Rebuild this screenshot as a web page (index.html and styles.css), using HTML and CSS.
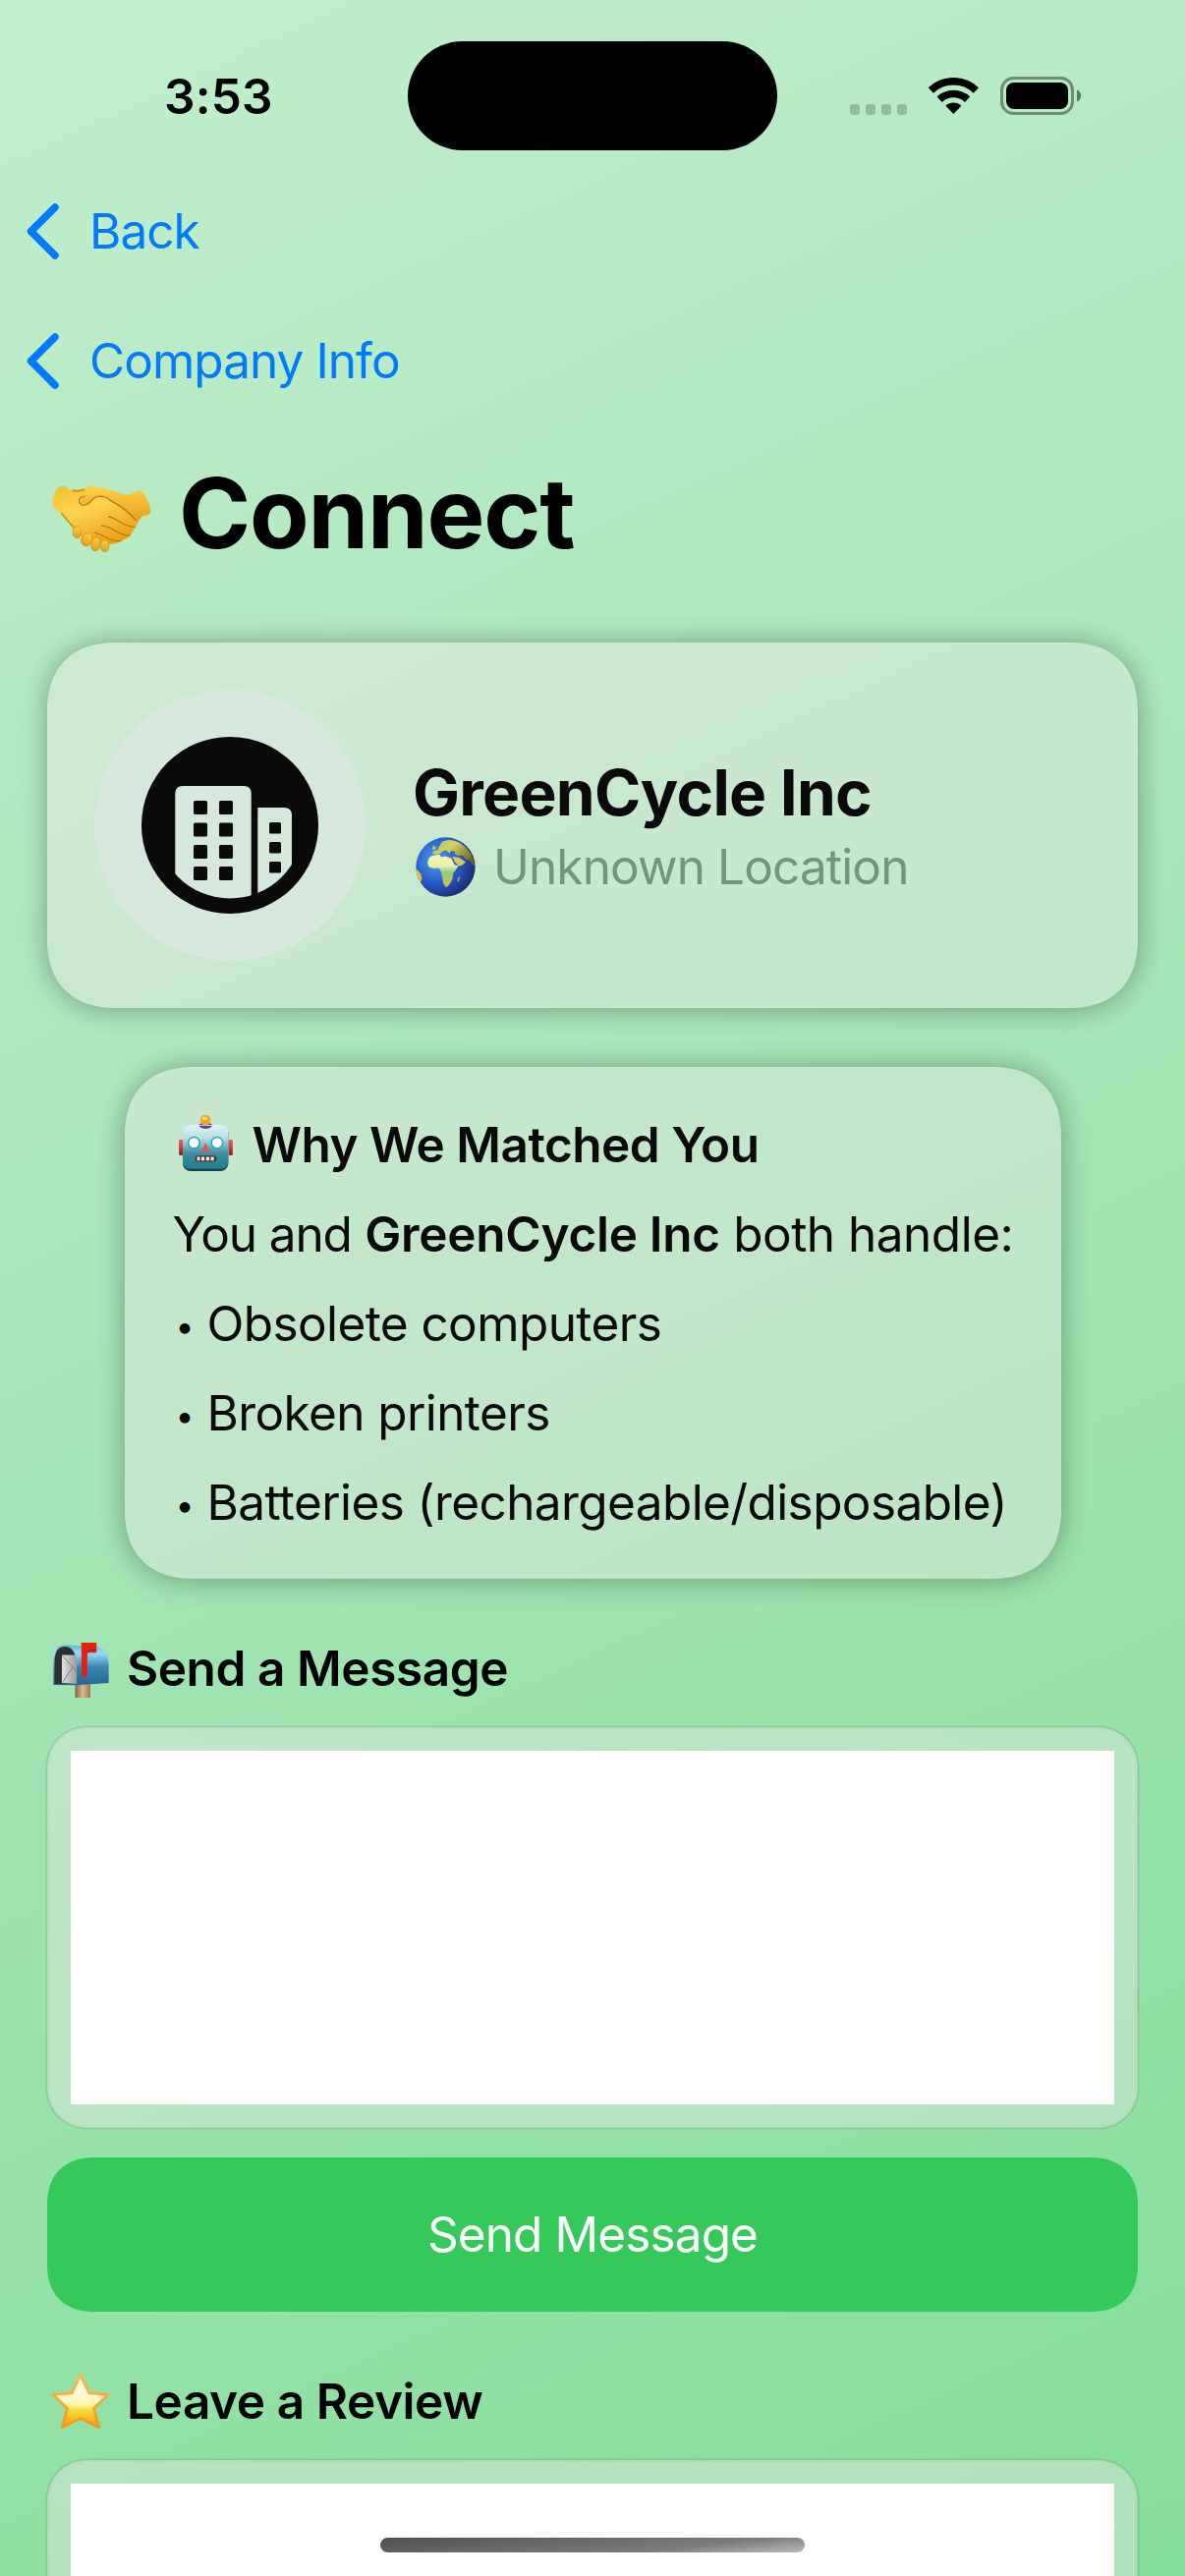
FILE: index.html
```
<!DOCTYPE html>
<html lang="en">
<head>
  <meta charset="UTF-8">
  <title>Connect</title>
  <meta name="viewport" content="width=device-width, initial-scale=1.0">
  <link rel="stylesheet" href="styles.css">
</head>
<body>
<div class="screen">
  <div class="status-bar">
    <div class="time">3:53</div>
    <div class="island"></div>
    <div class="status-icons">
      <div class="dots"><i></i><i></i><i></i><i></i></div>
      <svg class="wifi" viewBox="0 0 51 37">
        <path d="M2.2 13A33.2 33.2 0 0 1 48.2 13" fill="none" stroke="#000" stroke-width="7.6" transform="translate(.2 0)"/>
        <path d="M11.2 22.2A20.5 20.5 0 0 1 39.6 22.2" fill="none" stroke="#000" stroke-width="7.6"/>
        <path d="M25.4 37L17.4 28.7A11.5 11.5 0 0 1 33.4 28.7Z"/>
      </svg>
      <svg class="battery" viewBox="0 0 82 39">
        <rect x="1.5" y="1.5" width="72" height="36" rx="12" fill="none" stroke="#000" stroke-opacity=".4" stroke-width="3"/>
        <rect x="6" y="6" width="63" height="27" rx="8"/>
        <path d="M78 13.5Q82 15 82 19.5T78 25.5Z" fill-opacity=".5"/>
      </svg>
    </div>
  </div>

  <div class="nav-row">
    <svg class="chevron" viewBox="0 0 33 57"><path d="M29 4L4.500 28.500L29 53"/></svg>
    <span>Back</span>
  </div>
  <div class="nav-row">
    <svg class="chevron" viewBox="0 0 33 57"><path d="M29 4L4.500 28.500L29 53"/></svg>
    <span>Company Info</span>
  </div>

  <main>
    <h1>
      <svg class="handshake" viewBox="42 44 300 202">
        <defs>
          <linearGradient id="skin" x1="0" y1="0" x2=".6" y2="1"><stop offset="0" stop-color="#f9bd2b"/><stop offset=".45" stop-color="#ffd452"/><stop offset="1" stop-color="#e9a31a"/></linearGradient>
          <linearGradient id="skin2" x1="0" y1="0" x2="0" y2="1"><stop offset="0" stop-color="#ffd04a"/><stop offset="1" stop-color="#e29a12"/></linearGradient>
        </defs>
        <path d="M122 95Q126 60 150 49Q162 44 180 49Q220 56 262 72Q285 71 300 60Q316 58 327 82Q339 104 341 124Q334 137 316 136Q304 150 294 168L262 160Z" fill="url(#skin2)"/>
        <path d="M42 98C44 75 56 50 70 47Q84 45 96 57Q118 60 140 54L128 96Q140 108 158 94Q166 82 182 78Q202 76 216 88L288 138Q304 152 294 172Q284 184 278 196Q266 206 252 212Q240 220 220 222L140 208Q112 180 104 172Q84 152 70 128Q46 118 42 98Z" fill="url(#skin)"/>
        <path d="M131 78Q116 92 130 102Q144 108 158 94Q168 78 186 77Q204 78 216 88Q262 112 296 150" fill="none" stroke="#b6760c" stroke-width="4"/>
        <path d="M70 128Q88 150 108 172M104 60Q124 64 140 56M132 79Q138 76 142 80" fill="none" stroke="#d28e13" stroke-width="5"/>
        <path d="M213 139Q226 141 246 154Q268 168 292 170M192 166Q214 168 230 180Q252 194 277 196M170 186Q186 190 202 200Q226 214 250 212" fill="none" stroke="#b97a0b" stroke-width="4" stroke-linecap="round"/>
        <g fill="url(#skin2)" stroke="#cd8a10" stroke-width="2">
          <ellipse cx="118" cy="186" rx="13" ry="18"/>
          <ellipse cx="147" cy="208" rx="16" ry="20" transform="rotate(25 147 208)"/>
          <ellipse cx="174" cy="222" rx="14" ry="21" transform="rotate(10 174 222)"/>
          <ellipse cx="201" cy="227" rx="13" ry="18"/>
        </g>
      </svg>
      <span>Connect</span>
    </h1>

    <section class="card company">
      <div class="avatar">
        <svg viewBox="0 0 180 180">
          <clipPath id="inner"><circle cx="90" cy="90" r="74.500"/></clipPath>
          <circle cx="90" cy="90" r="90" fill="#0a0a0a"/>
          <g clip-path="url(#inner)" fill="#d6e8dc">
            <path d="M34.300 180V57.500Q34.300 50 42 50H104Q111.700 50 111.700 57.500V180Z"/>
            <path d="M118.300 180V72H145Q153 72 153 80V180Z"/>
          </g>
          <g fill="#0a0a0a">
            <rect x="53" y="65" width="14" height="14" rx="1.500"/><rect x="79" y="65" width="14" height="14" rx="1.500"/>
            <rect x="53" y="87.500" width="14" height="14" rx="1.500"/><rect x="79" y="87.500" width="14" height="14" rx="1.500"/>
            <rect x="53" y="110" width="14" height="14" rx="1.500"/><rect x="79" y="110" width="14" height="14" rx="1.500"/>
            <rect x="53" y="132" width="14" height="14" rx="1.500"/><rect x="79" y="132" width="14" height="14" rx="1.500"/>
            <rect x="130" y="87" width="12" height="11.500" rx="1.500"/>
            <rect x="130" y="107" width="12" height="11.500" rx="1.500"/>
            <rect x="130" y="127" width="12" height="11.500" rx="1.500"/>
          </g>
        </svg>
      </div>
      <div class="company-text">
        <h2>GreenCycle Inc</h2>
        <p class="location">
          <svg class="globe" viewBox="0 0 182 182">
            <defs>
              <radialGradient id="sea" cx=".34" cy=".38" r=".72"><stop offset="0" stop-color="#4da0ea"/><stop offset=".55" stop-color="#2559c8"/><stop offset="1" stop-color="#1d2666"/></radialGradient>
              <linearGradient id="land" x1="0" y1="0" x2="1" y2=".6"><stop offset="0" stop-color="#a5c766"/><stop offset=".45" stop-color="#d6cf62"/><stop offset="1" stop-color="#6b651f"/></linearGradient>
              <linearGradient id="africa" x1="0" y1="0" x2="0" y2="1"><stop offset="0" stop-color="#faf6b0"/><stop offset=".35" stop-color="#e9f0ac"/><stop offset=".55" stop-color="#93c97c"/><stop offset="1" stop-color="#d3ba52"/></linearGradient>
              <clipPath id="ball"><circle cx="91" cy="91" r="90"/></clipPath>
            </defs>
            <circle cx="91" cy="91" r="90" fill="url(#sea)"/>
            <g clip-path="url(#ball)">
              <path d="M51 52L54 42L66 40L72 28L80 14L100 8Q140 10 162 44Q176 62 180 90L172 82L164 72L150 66L142 56L130 57L118 52L120 45L108 42L102 50L94 40L84 42L74 50L62 53ZM50 38L54 24L62 32L60 38Z" fill="url(#land)"/>
              <path d="M36 78Q38 60 52 57L72 53L78 61L90 58L108 64L118 84L130 88Q120 102 114 110L112 126Q104 148 92 152Q84 146 82 128L78 110Q74 98 70 94Q50 98 40 90Z" fill="url(#africa)"/>
              <path d="M112 60L132 62L152 76L142 85L130 88L118 74Z" fill="#d6c95c"/>
              <path d="M128 126L135 118L132 132L127 137Z" fill="#c5b64e"/>
              <path d="M0 94L16 112L19 126L14 144L0 130Z" fill="#d8c529"/>
            </g>
          </svg>
          <span>Unknown Location</span>
        </p>
      </div>
    </section>

    <section class="card match">
      <h3>
        <svg class="robot" viewBox="202 182 154 160">
          <defs>
            <linearGradient id="head" x1="0" y1="0" x2="0" y2="1"><stop offset="0" stop-color="#dff6f8"/><stop offset=".3" stop-color="#b8dfe4"/><stop offset=".65" stop-color="#3f8c9d"/><stop offset="1" stop-color="#1d7f91"/></linearGradient>
            <linearGradient id="ear" x1="0" y1="0" x2="0" y2="1"><stop offset="0" stop-color="#f06363"/><stop offset="1" stop-color="#97162c"/></linearGradient>
          </defs>
          <rect x="202" y="252" width="12" height="45" rx="4" fill="url(#ear)"/>
          <rect x="344" y="252" width="12" height="45" rx="4" fill="url(#ear)"/>
          <path d="M258 213Q260 204 278 204T298 213Q290 221 278 221T258 213Z" fill="#735a91"/>
          <rect x="213" y="211" width="130" height="131" rx="22" fill="#13434f"/>
          <rect x="213" y="210" width="130" height="126" rx="21" fill="url(#head)"/>
          <path d="M259 212H298Q290 221 278 221T259 212Z" fill="#5d4583"/>
          <circle cx="278" cy="196" r="14.500" fill="#f9a319"/>
          <ellipse cx="276" cy="191" rx="8" ry="5" fill="#ffe27c"/>
          <circle cx="245" cy="261" r="16" fill="#fff" stroke="#20a4c4" stroke-width="4"/>
          <circle cx="311" cy="261" r="16" fill="#fff" stroke="#20a4c4" stroke-width="4"/>
          <path d="M278 262L291 287H265Z" fill="#d85a55"/>
          <rect x="248" y="298" width="61" height="17" rx="8" fill="#4a3434"/>
          <path d="M254 301H262V312H254ZM266 301H275V312H266ZM280 301H289V312H280ZM293 301H302V312H293Z" fill="#f6eee0"/>
        </svg>
        <span>Why We Matched You</span>
      </h3>
      <p class="intro"><span class="tight">You and</span> <b>GreenCycle Inc</b> both handle:</p>
      <p class="item"><span class="bullet">•</span>Obsolete computers</p>
      <p class="item"><span class="bullet">•</span>Broken printers</p>
      <p class="item"><span class="bullet">•</span>Batteries (rechargeable/disposable)</p>
    </section>

    <h3 class="section-title">
      <svg class="emoji" viewBox="0 0 60 60">
        <defs>
          <linearGradient id="box" x1="0" y1="0" x2="0" y2="1"><stop offset="0" stop-color="#5db5e2"/><stop offset=".2" stop-color="#93dcf8"/><stop offset=".55" stop-color="#3d85b4"/><stop offset="1" stop-color="#246496"/></linearGradient>
          <linearGradient id="post"><stop offset="0" stop-color="#7d6244"/><stop offset=".5" stop-color="#dcbd83"/><stop offset="1" stop-color="#98794e"/></linearGradient>
          <linearGradient id="paper"><stop offset="0" stop-color="#e2e2e2"/><stop offset="1" stop-color="#9b9b9b"/></linearGradient>
        </defs>
        <rect x="24.500" y="46" width="15.500" height="14" fill="url(#post)"/>
        <path d="M2.400 47V21Q3 6.300 15 6.300L46 8Q58.600 10 58.600 28V45L26 47.300Z" fill="url(#box)"/>
        <path d="M3.600 46V21Q4.500 8 14 8Q24.500 8.500 25 22V46Z" fill="#2d2f32"/>
        <path d="M11 16.500H24.500L26 22V46L11 45Z" fill="url(#paper)"/>
        <path d="M11 17L26 33M12 44L22 29" stroke="#7f7f7f" stroke-width="1" fill="none"/>
        <path d="M30.700 4H46.200V14.300H37L36.600 36Q36 39 33.800 39T31.200 36Z" fill="#e5200d"/>
        <path d="M37 14.300L39 11.500H46" stroke="#a81205" stroke-width="1" fill="none"/>
      </svg>
      <span>Send a Message</span>
    </h3>
    <div class="field"><div class="editor"></div></div>
    <button class="send">Send Message</button>

    <h3 class="section-title review">
      <svg class="emoji" viewBox="0 0 60 60">
        <defs>
          <linearGradient id="star" x1="0" y1="0" x2="0" y2="1"><stop offset="0" stop-color="#fff4c8"/><stop offset=".3" stop-color="#fffde6"/><stop offset=".58" stop-color="#fff3a8"/><stop offset=".68" stop-color="#fbdc3a"/><stop offset="1" stop-color="#f69a0c"/></linearGradient>
          <linearGradient id="rim" x1="0" y1="0" x2="0" y2="1"><stop offset="0" stop-color="#fbb95c"/><stop offset="1" stop-color="#f59a14"/></linearGradient>
        </defs>
        <path d="M29.800 3L38.800 21.800L58 23.200L43.500 37.500L48.500 56.500L29.800 47.500L11.500 56.500L16.500 37.500L2 23.200L21.200 21.800Z" fill="url(#star)" stroke="url(#rim)" stroke-width="3" stroke-linejoin="round"/>
      </svg>
      <span>Leave a Review</span>
    </h3>
    <div class="field"><div class="editor"></div></div>
  </main>
  <div class="home-indicator"></div>
</div>
</body>
</html>
```

FILE: styles.css
```
* { box-sizing: border-box; margin: 0; padding: 0; }
body {
  font-family: Inter, 'Liberation Sans', sans-serif;
  font-size: 49.5px;
  line-height: 61px;
  letter-spacing: -0.5px;
  color: #000;
}
svg { display: block; flex-shrink: 0; }
.screen {
  position: relative;
  width: 1206px;
  height: 2622px;
  overflow: hidden;
  background: linear-gradient(155.3deg, #c2eecd, #85dd9b);
}

/* status bar */
.status-bar {
  height: 169px;
  padding-top: 25px;
  display: grid;
  grid-template-columns: 415px 376px 1fr;
  align-items: center;
}
.time {
  padding: 3px 0 0 167px;
  font-weight: 600;
  letter-spacing: 0.2px;
}
.island { height: 111px; background: #000; border-radius: 56px; }
.status-icons { display: flex; padding-left: 74px; }
.dots { display: flex; gap: 6px; padding-top: 28px; margin-right: 22px; }
.dots i { width: 10px; height: 11px; border-radius: 3px; background: rgba(0, 0, 0, 0.2); }
.wifi { width: 51px; height: 37px; margin: 1px 22px 0 0; }
.battery { width: 82px; height: 39px; }

/* back links */
.nav-row {
  height: 132px;
  padding-left: 27px;
  display: flex;
  align-items: center;
  gap: 31px;
  color: #007aff;
  letter-spacing: -0.95px;
}
.chevron { width: 33px; height: 57px; }
.chevron path {
  fill: none;
  stroke: #007aff;
  stroke-width: 7.5;
  stroke-linecap: round;
  stroke-linejoin: round;
}

main { padding: 0 48px; }
h1 {
  height: 178px;
  margin-bottom: 43px;
  padding-left: 5px;
  display: flex;
  align-items: center;
  gap: 28px;
  font-size: 99px;
  letter-spacing: -1.2px;
}
.handshake { width: 101px; height: 68px; margin-top: 11px; }

.card {
  background: rgba(247, 234, 238, 0.37);
  border-radius: 72px;
  corner-shape: superellipse(1.25);
  box-shadow: 0 1px 28px rgba(0, 0, 0, 0.33);
  padding: 48px;
  color: #0a0a0a;
}
.company { height: 372px; display: flex; align-items: center; gap: 48px; }
.avatar {
  width: 276px;
  height: 276px;
  padding: 48px;
  border-radius: 50%;
  background: #d6e8dc;
}
.company-text { display: flex; flex-direction: column; gap: 6px; }
h2 { font-size: 64px; line-height: 79px; letter-spacing: -0.75px; }
.location {
  display: flex;
  align-items: center;
  gap: 18px;
  padding-left: 3px;
  color: #70967c;
  letter-spacing: -0.86px;
}
.globe { width: 61px; height: 61px; }

.match {
  width: 953px;
  height: 521px;
  margin: 60px auto 0;
  padding-top: 49px;
  display: flex;
  flex-direction: column;
  gap: 30px;
  white-space: nowrap;
}
h3 { display: flex; align-items: center; font-size: 49.5px; font-weight: 600; }
.match h3 { gap: 20px; padding-left: 7px; }
.robot { width: 55px; height: 57px; margin-top: -4px; }
.match b { font-weight: 600; letter-spacing: -0.3px; }
.intro { padding-left: 1px; }
.tight { letter-spacing: -1.1px; }
.item { display: flex; height: 61px; padding-left: 4px; letter-spacing: -0.6px; }
.bullet { width: 32px; padding-top: 2px; font-size: 34px; }

.section-title {
  height: 62px;
  margin: 60px 0 29px;
  padding-left: 4px;
  gap: 17px;
  letter-spacing: -0.42px;
}
.emoji { width: 60px; height: 60px; }
.field {
  height: 408px;
  padding: 24px;
  border-radius: 40px;
  background: rgba(247, 234, 238, 0.37);
  box-shadow: 0 0 0 1.5px rgba(110, 140, 120, 0.28), inset 0 0 3px rgba(110, 140, 120, 0.3);
}
.editor { height: 360px; background: #fff; }
.send {
  display: block;
  width: 100%;
  height: 157px;
  margin-top: 30px;
  border: none;
  border-radius: 48px;
  corner-shape: superellipse(1.2);
  background: #35c95b;
  color: #fff;
  font: inherit;
  letter-spacing: -0.9px;
}
.home-indicator {
  position: absolute;
  left: 387px;
  bottom: 24px;
  width: 432px;
  height: 15px;
  border-radius: 8px;
  background: linear-gradient(174deg, #505050, #7c7c7c 70%, #bbb);
}
```
